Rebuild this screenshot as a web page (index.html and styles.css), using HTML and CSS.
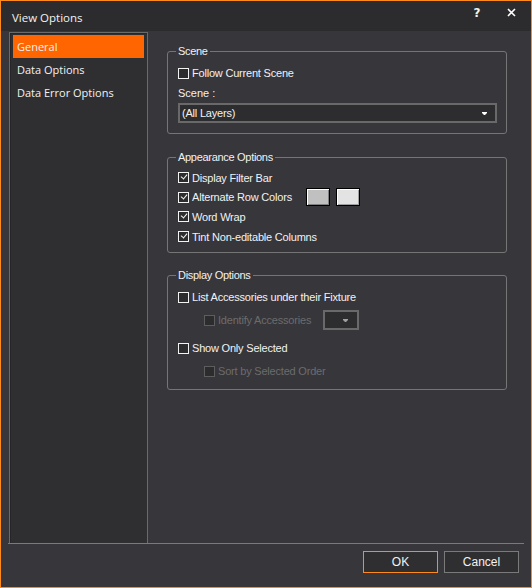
FILE: index.html
```html
<!DOCTYPE html>
<html>
    <head>
        <title>View Options</title>
        <link rel="stylesheet" href="styles.css">
    </head>
    <body>
        <div class="window">
            <div class="titlebar">
                <span class="title">View Options</span>
                <span class="tb_help">?</span>
                <span class="tb_close">
                    <svg width="9" height="9" viewBox="0 0 9 9"><path d="M1 1 L8 8 M8 1 L1 8" stroke="#ffffff" stroke-width="1.6" fill="none"/></svg>
                </span>
            </div>
            <div class="main">
                <div class="nav">
                    <div class="nav_item selected">General</div>
                    <div class="nav_item">Data Options</div>
                    <div class="nav_item">Data Error Options</div>
                </div>
                <div class="pane">
                    <fieldset class="group group_scene">
                        <legend>Scene</legend>
                        <div class="row">
                            <span class="check"></span><span class="label">Follow Current Scene</span>
                        </div>
                        <div class="row field_label">Scene :</div>
                        <div class="combo">
                            <span class="combo_text">(All Layers)</span>
                            <svg class="arrow" width="5" height="3" viewBox="0 0 5 3"><path d="M0 0 H5 V1 L3 3 H2 L0 1 Z" fill="#ffffff"/></svg>
                        </div>
                    </fieldset>

                    <fieldset class="group group_appearance">
                        <legend>Appearance Options</legend>
                        <div class="row">
                            <span class="check checked"></span><span class="label">Display Filter Bar</span>
                        </div>
                        <div class="row">
                            <div class="wide_label"><span class="check checked"></span><span class="label">Alternate Row Colors</span></div>
                            <span class="swatch swatch_1"></span>
                            <span class="swatch swatch_2"></span>
                        </div>
                        <div class="row">
                            <span class="check checked"></span><span class="label">Word Wrap</span>
                        </div>
                        <div class="row">
                            <span class="check checked"></span><span class="label">Tint Non-editable Columns</span>
                        </div>
                    </fieldset>

                    <fieldset class="group group_display">
                        <legend>Display Options</legend>
                        <div class="row">
                            <span class="check"></span><span class="label">List Accessories under their Fixture</span>
                        </div>
                        <div class="row sub disabled">
                            <div class="sub_label"><span class="check"></span><span class="label">Identify Accessories</span></div>
                            <div class="combo small_combo">
                                <svg class="arrow" width="5" height="3" viewBox="0 0 5 3"><path d="M0 0 H5 V1 L3 3 H2 L0 1 Z" fill="#a0a0a0"/></svg>
                            </div>
                        </div>
                        <div class="row gap_top">
                            <span class="check"></span><span class="label">Show Only Selected</span>
                        </div>
                        <div class="row sub disabled">
                            <span class="check"></span><span class="label">Sort by Selected Order</span>
                        </div>
                    </fieldset>
                </div>
            </div>
            <div class="footer">
                <button class="btn btn_ok" type="button">OK</button>
                <button class="btn" type="button">Cancel</button>
            </div>
        </div>
    </body>
</html>
```

FILE: styles.css
```css
html, body {
    margin: 0;
    padding: 0;
    background: #37363b;
}
.window {
    width: 532px;
    height: 588px;
    box-sizing: border-box;
    border: 1px solid #ff8a1c;
    background: #37363b;
    display: flex;
    flex-direction: column;
    color: #f2f2f2;
    font-family: "Liberation Sans", Arial, sans-serif;
    font-size: 11px;
}
.titlebar {
    height: 30px;
    flex: none;
    background: #2c2c2e;
    display: flex;
    align-items: center;
    padding: 0 0 0 11px;
    font-family: "Open Sans", sans-serif;
    font-size: 11.5px;
}
.title {
    flex: 1;
    padding-top: 3px;
}
.tb_help {
    width: 14px;
    font-family: "DejaVu Sans", sans-serif;
    font-weight: bold;
    font-size: 12px;
    margin-right: 23px;
    margin-top: -7px;
    text-align: center;
}
.tb_close {
    width: 9px;
    margin-right: 15px;
    margin-top: -8px;
    display: flex;
}
/* nav + pane share one bottom rule that separates the buttons */
.main {
    flex: 1;
    display: flex;
    padding: 1px 0 0 0;
    margin: 0 7px 0 7px;
    border-bottom: 1px solid #7a7a7a;
    min-height: 0;
}
.nav {
    width: 139px;
    margin-left: 1px;
    box-sizing: border-box;
    border: 1px solid #6a6a6a;
    border-bottom: none;
    background: #2f2f31;
    box-shadow: inset 1px 1px 0 #262628;
    padding: 2px 3px 0 3px;
    font-family: "Open Sans", sans-serif;
    font-size: 11px;
}
.nav_item {
    height: 23px;
    line-height: 23px;
    padding-left: 4px;
}
.nav_item.selected {
    background: #ff6500;
}
.pane {
    flex: 1;
    padding: 12px 17px 0 19px;
}
.group {
    margin: 0;
    padding: 0 9px 0 10px;
    border: 1px solid #757575;
    border-radius: 3px;
    min-width: 0;
}
.group legend {
    padding: 0 2px;
    margin-left: -2px;
    line-height: 14px;
    font-size: 11px;
    letter-spacing: -0.3px;
}
.group_scene {
    padding-top: 5px;
    padding-bottom: 10px;
}
.group_appearance {
    margin-top: 16px;
    padding-top: 4px;
    padding-bottom: 6px;
}
.group_display {
    margin-top: 15px;
    padding-top: 5px;
    padding-bottom: 8px;
}
.row {
    height: 20px;
    display: flex;
    align-items: center;
}
.group_appearance .row {
    height: 19.6px;
}
.row.sub {
    padding-left: 26px;
    margin-top: 3px;
}
.row.gap_top {
    margin-top: 8px;
}
.field_label {
    padding-left: 0;
}
.check {
    width: 11px;
    height: 11px;
    box-sizing: border-box;
    border: 1px solid #f2f2f2;
    background: #2c2c2e;
    flex: none;
    position: relative;
}
.check.checked::after {
    content: "";
    position: absolute;
    left: 2.5px;
    top: 0px;
    width: 3px;
    height: 5px;
    border: solid #f2f2f2;
    border-width: 0 1.5px 1.5px 0;
    transform: rotate(40deg);
}
.label {
    margin-left: 3px;
    letter-spacing: -0.2px;
    white-space: nowrap;
}
.disabled {
    color: #6c6c6c;
}
.disabled .check {
    border-color: #5d5d5d;
}
.combo {
    height: 20px;
    box-sizing: border-box;
    border: 2px solid #696969;
    background: #2d2d2f;
    display: flex;
    align-items: center;
    padding: 0 8px 0 2px;
}
.combo_text {
    flex: 1;
    letter-spacing: -0.2px;
}
.arrow {
    flex: none;
}
.small_combo {
    width: 36px;
    justify-content: flex-end;
    padding-right: 9px;
}
.wide_label {
    width: 128px;
    display: flex;
    align-items: center;
}
.sub_label {
    width: 119px;
    display: flex;
    align-items: center;
}
.swatch {
    width: 24px;
    height: 18px;
    box-sizing: border-box;
    border: 1px solid #000000;
    margin-right: 6px;
}
.swatch_1 {
    background: #c0c0c0;
    box-shadow: inset 1px 1px 0 #ffffff, inset -1px -1px 0 #808080;
}
.swatch_2 {
    background: #e3e3e3;
    box-shadow: inset 1px 1px 0 #ffffff, inset -1px -1px 0 #a0a0a0;
}
.footer {
    height: 43px;
    flex: none;
    display: flex;
    justify-content: flex-end;
    align-items: flex-start;
    padding: 7px 12px 0 0;
    box-sizing: border-box;
}
.btn {
    width: 75px;
    height: 22px;
    margin-left: 6px;
    background: #2f2f31;
    border: 1px solid #7a7a7a;
    color: #f2f2f2;
    font-family: "Liberation Sans", Arial, sans-serif;
    font-size: 12px;
    padding: 0;
}
.btn_ok {
    border-color: #ff8a1c;
}
```
